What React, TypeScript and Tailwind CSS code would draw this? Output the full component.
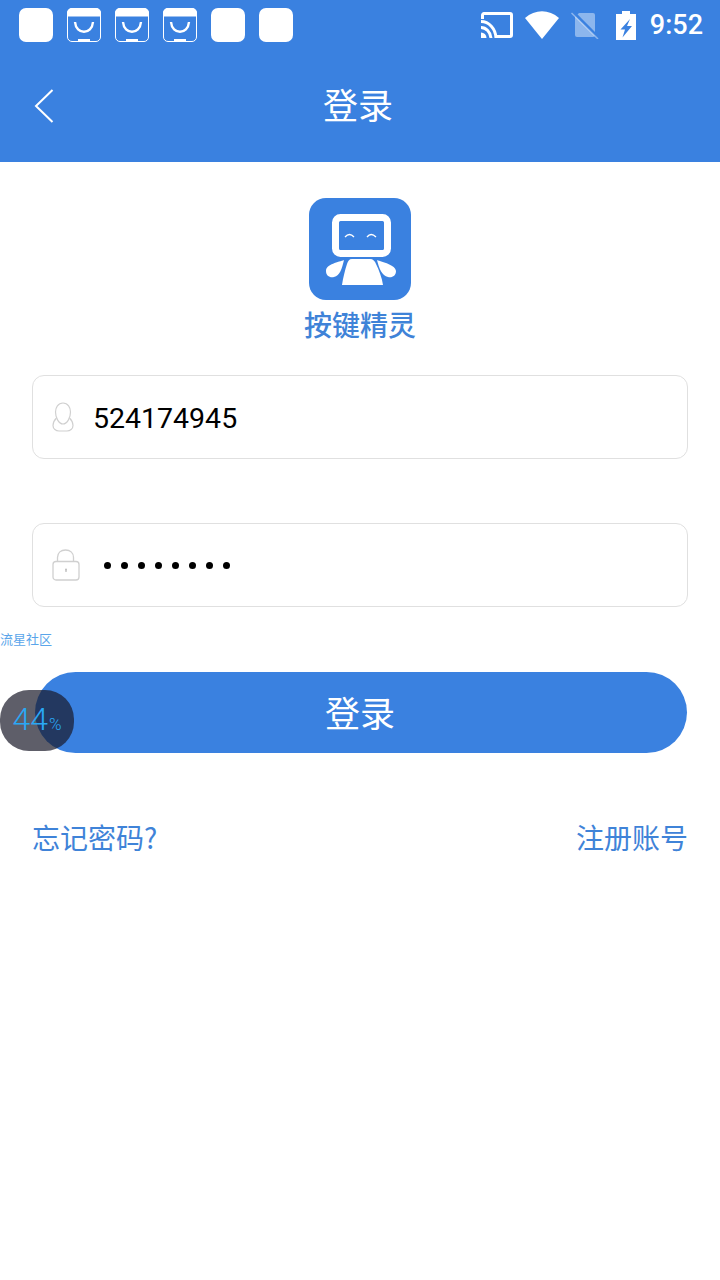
const cjk = { fontFamily: '"Noto Sans CJK SC", sans-serif' }

function BagIcon() {
  return (
    <svg width="34" height="34" viewBox="0 0 34 34" fill="none">
      <path d="M5 0.5H29A4.5 4.5 0 0 1 33.5 5V29A4.5 4.5 0 0 1 29 33.5H5A4.5 4.5 0 0 1 0.5 29V5A4.5 4.5 0 0 1 5 0.5Z" stroke="#fff" strokeWidth="1" />
      <path d="M5 0H29A5 5 0 0 1 34 5V8.500H0V5A5 5 0 0 1 5 0Z" fill="#fff" />
      <path d="M8 14C9 27 25 27 26 14" stroke="#fff" strokeWidth="2.400" />
      <rect x="11" y="31" width="12" height="2" fill="#fff" />
    </svg>
  )
}

function NotifSquare() {
  return <div className="h-[34px] w-[34px] rounded-[7px] bg-white" />
}

function StatusBar() {
  return (
    <div className="flex h-[50px] items-center justify-between pl-[19px] pr-[17px]">
      <div className="flex gap-[14px]">
        <NotifSquare />
        <BagIcon />
        <BagIcon />
        <BagIcon />
        <NotifSquare />
        <NotifSquare />
      </div>
      <div className="flex items-center">
        {/* cast */}
        <svg width="32" height="26" viewBox="0 0 32 26" fill="none">
          <path d="M1.500 7V3A1.500 1.500 0 0 1 3 1.500H29A1.500 1.500 0 0 1 30.500 3V23A1.500 1.500 0 0 1 29 24.500H15" stroke="#fff" strokeWidth="3" />
          <path d="M0 9.500C8 9.500 14.500 16.500 15 26M0 15.500C5 15.500 9.500 20 10 26" stroke="#fff" strokeWidth="3" />
          <path d="M0 20.500A5.500 5.500 0 0 1 5.500 26H0Z" fill="#fff" />
        </svg>
        {/* wifi */}
        <svg width="34" height="28" viewBox="0 0 34 28" className="ml-[12px]">
          <path d="M17 28L0 7C10 -2 24 -2 34 7Z" fill="#fff" />
        </svg>
        {/* no sim */}
        <svg width="28" height="27" viewBox="0 0 28 27" className="ml-[12px]">
          <path d="M8 1H22A2 2 0 0 1 24 3V23A2 2 0 0 1 22 25H6A2 2 0 0 1 4 23V5Z" fill="#fff" fillOpacity="0.42" />
          <path d="M2 0L28 26" stroke="#3a81e0" strokeWidth="3" />
          <path d="M0.500 1L27 27" stroke="#fff" strokeOpacity="0.42" strokeWidth="1.500" />
        </svg>
        {/* battery charging */}
        <svg width="20" height="29" viewBox="0 0 20 29" className="ml-[17px]">
          <path fillRule="evenodd" d="M6 0H14V3H20V29H0V3H6ZM14 8L4.500 18.500H9L6.500 26.500L16 15H11Z" fill="#fff" />
        </svg>
        <span className="ml-[14px] text-[27px] font-medium leading-none text-white" style={{ fontFamily: 'Roboto, sans-serif' }}>9:52</span>
      </div>
    </div>
  )
}

function RobotLogo() {
  return (
    <svg width="102" height="102" viewBox="0 0 102 102">
      <rect width="102" height="102" rx="17" fill="#3a81e0" />
      <rect x="26.500" y="19.500" width="52" height="36" rx="5" fill="#3a81e0" stroke="#fff" strokeWidth="7" />
      <path d="M36 39Q40.500 34 45 39M58 39Q62 34 67 39" fill="none" stroke="#fff" strokeWidth="1.300" />
      <path d="M43 61H61C64 61 66 63 67 66C70 72 73 80 74 87H33C34 80 36 72 38 66C39 63 40 61 43 61Z" fill="#fff" />
      <path d="M35 62C30 64 17 66 17 73C17 78 21 80 25 79C31 78 33 70 35 62Z" fill="#fff" />
      <path d="M68 62C73 64 87 67 87 73C87 78 83 80 79 79C73 78 70 70 68 62Z" fill="#fff" />
    </svg>
  )
}

function UserIcon() {
  return (
    <svg width="22" height="30" viewBox="0 0 22 30" fill="none" stroke="#d0d0d0" strokeWidth="1.200">
      <path d="M11 1C6 1 3.500 5.500 3.500 10C3.500 15 6.500 22 11 22C15.500 22 18.500 15 18.500 10C18.500 5.500 16 1 11 1Z" />
      <path d="M4.500 16C2.500 18 1 20.500 1 23.500C1 27 4 29 7 29H15C18 29 21 27 21 23.500C21 20.500 19.500 18 17.500 16" />
    </svg>
  )
}

function LockIcon() {
  return (
    <svg width="28" height="32" viewBox="0 0 28 32" fill="none" stroke="#d0d0d0" strokeWidth="1.300">
      <rect x="1" y="12.500" width="26" height="18.500" rx="3" />
      <path d="M5.500 12.500V8.500C5.500 3.500 9 1 13.500 1C18 1 21.500 3.500 21.500 8.500V12.500" />
      <circle cx="14" cy="20.500" r="1" fill="#bdbdbd" stroke="none" />
      <path d="M14 21V23" stroke="#bdbdbd" />
    </svg>
  )
}

export default function App() {
  return (
    <div className="relative h-[1280px] w-[720px] overflow-hidden bg-white">
      <div className="h-[162px] bg-[#3a81e0]">
        <StatusBar />
        <div className="relative flex h-[112px] items-center justify-center pb-[6px] pr-[4px]">
          <svg width="20" height="34" viewBox="0 0 20 34" fill="none" className="absolute left-[34px] top-[39px]">
            <path d="M18.500 1L2 17L18.500 33" stroke="#fff" strokeWidth="2" />
          </svg>
          <span className="text-[35px] leading-none text-white" style={cjk}>登录</span>
        </div>
      </div>

      <div className="flex flex-col items-center pt-[36px]">
        <RobotLogo />
        <span className="mt-[6px] text-[28px] font-medium leading-[36px] text-[#3f83d8]" style={cjk}>按键精灵</span>
      </div>

      <div className="mt-[33px] flex flex-col px-[32px]">
        <div className="flex h-[84px] items-center rounded-[12px] border border-[#e0e0e0] pl-[19px]">
          <UserIcon />
          <span className="ml-[19px] pt-[4px] text-[28.500px] text-black" style={{ fontFamily: 'Roboto, sans-serif' }}>524174945</span>
        </div>
        <div className="mt-[64px] flex h-[84px] items-center rounded-[12px] border border-[#e0e0e0] pl-[19px]">
          <LockIcon />
          <div className="ml-[24px] flex gap-[10px]">
            {[0, 1, 2, 3, 4, 5, 6, 7].map((i) => (
              <span key={i} className="h-[7px] w-[7px] rounded-full bg-black" />
            ))}
          </div>
        </div>
      </div>

      <div className="mt-[65px] ml-[35px] flex h-[81px] w-[652px] items-center justify-center rounded-full bg-[#3a81e0] pb-[3px] pr-[2px]">
        <span className="text-[35px] leading-none text-white" style={cjk}>登录</span>
      </div>

      <div className="mt-[66px] flex items-center justify-between px-[32px] text-[28px] leading-[36px] text-[#3f83d8]" style={cjk}>
        <span>忘记密码?</span>
        <span>注册账号</span>
      </div>

      {/* floating overlay widgets */}
      <span className="absolute left-0 top-[631px] text-[13px] leading-[16px] text-[#5aa5ea]" style={cjk}>流星社区</span>
      <div className="absolute left-0 top-[690px] flex h-[61px] w-[74px] items-baseline justify-center rounded-[29px] bg-[#1a1a2a]/70 pt-[10px] text-[#29a8f5]" style={{ fontFamily: 'Roboto, sans-serif' }}>
        <span className="text-[32px] font-light leading-[38px]">44</span>
        <span className="ml-[1px] text-[17px] font-light leading-none">%</span>
      </div>
    </div>
  )
}
